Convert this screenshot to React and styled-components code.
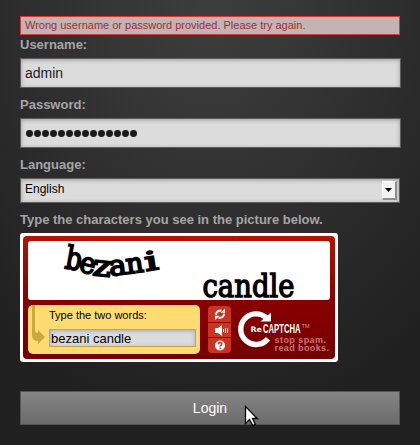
import React from "react";
import styled, { createGlobalStyle } from "styled-components";

const GlobalStyle = createGlobalStyle`
  * { box-sizing: border-box; }
  body { margin: 0; background: #202020; font-family: "Liberation Sans", Arial, sans-serif; }
`;

const Page = styled.main`
  position: relative;
  height: 445px;
  padding: 16px 19px 0 20px;
  overflow: hidden;
  background: radial-gradient(ellipse 330px 430px at 210px 0, #3d3d3d 0%, #363636 30%, #292929 70%, #202020 100%);
`;

const Form = styled.form`
  display: flex;
  flex-direction: column;
`;

const ErrorMessage = styled.div`
  width: 380px;
  height: 19px;
  padding-left: 4px;
  border: 1px solid #d83a3a;
  background: #c5b3b3;
  color: #9a3038;
  font-size: 11px;
  line-height: 17px;
`;

const Label = styled.label`
  height: ${(p) => p.$height}px;
  padding-top: ${(p) => p.$top}px;
  color: #a5a5a5;
  font-size: 13px;
  font-weight: bold;
  line-height: 15px;
`;

const Field = styled.input`
  width: 381px;
  height: 30px;
  padding: 0 4px;
  border: 1px solid #5e5e5e;
  border-radius: 0;
  outline: 0;
  background: #dcdcdc;
  box-shadow: inset 0 1px 4px #999;
  color: #1b1b1b;
  font: 14px "Liberation Sans", Arial, sans-serif;
`;

const Dots = styled.div`
  display: flex;
  align-items: center;
  gap: 1.2px;
  width: 381px;
  height: 30px;
  padding: 1px 5px 0;
  border: 1px solid #5e5e5e;
  background: #dcdcdc;
  box-shadow: inset 0 1px 4px #999;
`;

const Dot = styled.span`
  width: 6.8px;
  height: 6.8px;
  border-radius: 50%;
  background: #1b1b1b;
`;

const Select = styled.div`
  display: flex;
  justify-content: space-between;
  width: 380px;
  height: 25px;
  padding: 2px 2px 2px 4px;
  border: 1px solid #5e5e5e;
  background: #dcdcdc;
  box-shadow: inset 0 1px 4px #999;
  color: #000;
  font-size: 12px;
  line-height: 16px;
`;

const SelectArrow = styled.span`
  display: grid;
  place-items: center;
  width: 15px;
  height: 19px;
  border: 1px solid #fff;
  border-right: 2px solid #8e8e8e;
  border-bottom: 2px solid #8e8e8e;
  background: #f2f2ee;
`;

const Captcha = styled.section`
  width: 318px;
  height: 129px;
  padding: 3px;
  border-radius: 3px;
  background: #fff;
`;

const CaptchaBody = styled.div`
  height: 123px;
  padding: 5px;
  border-radius: 4px;
  background: linear-gradient(#b31500 0%, #a00b00 22%, #880000 55%, #750000 100%);
`;

const Challenge = styled.svg`
  display: block;
  width: 302px;
  height: 59px;
  border-radius: 3px;
  background: #fff;
  font-family: "DejaVu Serif", serif;
  stroke: #000;
`;

const CaptchaRow = styled.div`
  display: flex;
  padding-top: 5px;
`;

const AnswerPanel = styled.div`
  display: flex;
  width: 172px;
  height: 49px;
  border-radius: 5px;
  background: #ffdc73;
`;

const ArrowMark = styled.svg`
  width: 21px;
  height: 49px;
`;

const AnswerBody = styled.div`
  padding-top: 4px;
  font-size: 11px;
  line-height: 13px;
`;

const AnswerInput = styled.input`
  display: block;
  width: 147px;
  height: 18px;
  margin-top: 7px;
  padding: 0 1px;
  border: 1px solid #c6a543;
  border-radius: 0;
  outline: 0;
  background: #dcdcdc;
  box-shadow: inset 0 1px 4px #aaa;
  font: 13px "Liberation Sans", Arial, sans-serif;
`;

const Tools = styled.div`
  display: grid;
  grid-template-rows: 16px 14px 15px;
  gap: 1px;
  width: 23px;
  height: 47px;
  margin: 1px 0 0 8px;
  overflow: hidden;
  border-radius: 4px;
  background: #8d0b04;
`;

const Tool = styled.button`
  display: block;
  width: 23px;
  padding: 0;
  border: 0;
  overflow: hidden;
  background: #cd3322;
  svg { display: block; }
`;

const Logo = styled.svg`
  width: 99px;
  height: 50px;
`;

const Login = styled.button`
  width: 380px;
  height: 34px;
  margin-top: 29px;
  padding: 0;
  border: 1px solid #555;
  background: linear-gradient(#858585, #6b6b6b);
  color: #fff;
  font: 14px "Liberation Sans", Arial, sans-serif;
`;

const Cursor = styled.svg`
  position: absolute;
  left: 244px;
  top: 405px;
  width: 16px;
  height: 23px;
  pointer-events: none;
`;

const warped = [
  ["b", 36, 27, 10, 32, 0.8],
  ["e", 50, 30, 14, 29, 0.92],
  ["z", 64, 34, 6, 29, 1.2],
  ["a", 82, 35, -7, 28, 1.05],
  ["n", 99, 33, -8, 28, 0.98],
  ["i", 118, 30, -9, 26, 1.6],
];

export default function App() {
  return (
    <Page>
      <GlobalStyle />
      <Form onSubmit={(e) => e.preventDefault()}>
        <ErrorMessage>Wrong username or password provided. Please try again.</ErrorMessage>
        <Label $height={23} $top={2}>Username:</Label>
        <Field defaultValue="admin" />
        <Label $height={30} $top={9}>Password:</Label>
        <Dots>{Array.from({ length: 14 }, (_, i) => <Dot key={i} />)}</Dots>
        <Label $height={30} $top={9}>Language:</Label>
        <Select>
          English
          <SelectArrow>
            <svg width="8" height="4"><path d="M0 0h7L3.5 4z" /></svg>
          </SelectArrow>
        </Select>
        <Label $height={30} $top={9}>Type the characters you see in the picture below.</Label>
        <Captcha>
          <CaptchaBody>
            <Challenge viewBox="0 0 302 59">
              {warped.map(([letter, x, y, angle, size, stretch]) => (
                <text key={letter} fontSize={size} strokeWidth="1.8" transform={`translate(${x} ${y}) rotate(${angle}) scale(${stretch} 1)`}>
                  {letter}
                </text>
              ))}
              <text x="174.5" y="55.500" fontSize="32" strokeWidth="1.400" textLength="92" lengthAdjust="spacingAndGlyphs">candle</text>
            </Challenge>
            <CaptchaRow>
              <AnswerPanel>
                <ArrowMark viewBox="0 0 21 49">
                  <path d="M4 0h3v25q0 3 3 3v-3l7 7-7 7v-3q-6 0-6-6z" fill="#cca940" />
                </ArrowMark>
                <AnswerBody>
                  Type the two words:
                  <AnswerInput defaultValue="bezani candle" />
                </AnswerBody>
              </AnswerPanel>
              <Tools>
                <Tool type="button" aria-label="Refresh">
                  <svg width="23" height="16" fill="none" stroke="#fff" strokeWidth="1.800">
                    <path d="M8 9Q8 4.500 13.500 4.500M16 7.500Q16 12 10.500 12" />
                    <path d="M12.500 6.800L17 2.500v4.300zM11.500 9.700L7 14V9.700z" fill="#fff" stroke="none" />
                  </svg>
                </Tool>
                <Tool type="button" aria-label="Audio">
                  <svg width="23" height="15" fill="#fff">
                    <path d="M7 5h3l4-3v11l-4-3H7zM15 6h1v3h-1zM17 5h1v5h-1zM19 5h1v5h-1z" />
                  </svg>
                </Tool>
                <Tool type="button" aria-label="Help">
                  <svg width="23" height="15">
                    <circle cx="12" cy="7.500" r="5" fill="#fff" />
                    <path d="M10.300 6.200q0-1.700 1.800-1.700t1.700 1.500q0 1-1.600 1.800v.8M12.200 9.600v1.400" fill="none" stroke="#cd3322" strokeWidth="1.500" />
                  </svg>
                </Tool>
              </Tools>
              <Logo viewBox="0 0 99 50">
                <path d="M35.500 13A15.300 15.300 0 1 0 37 33.700" fill="none" stroke="#fff" strokeWidth="5.400" />
                <path d="M40 7.500v9H29.500z" fill="#fff" />
                <text x="19.500" y="27" fill="#fff" fontFamily="DejaVu Sans" fontSize="7.500" fontWeight="bold" textLength="11.500" lengthAdjust="spacingAndGlyphs">Re</text>
                <text x="32" y="28.300" fill="#fff" fontFamily="Liberation Sans" fontSize="12.700" fontWeight="bold" textLength="37.500" lengthAdjust="spacingAndGlyphs">CAPTCHA</text>
                <text x="70.500" y="23" fill="#d59b94" fontFamily="Liberation Sans" fontSize="5.500" textLength="8" lengthAdjust="spacingAndGlyphs">TM</text>
                <text x="43.500" y="37.500" fill="#c97872" fontFamily="Liberation Sans" fontSize="9" fontWeight="bold" textLength="51.500" lengthAdjust="spacing">stop spam.</text>
                <text x="43.500" y="45.700" fill="#c97872" fontFamily="Liberation Sans" fontSize="9" fontWeight="bold" textLength="54.500" lengthAdjust="spacing">read books.</text>
              </Logo>
            </CaptchaRow>
          </CaptchaBody>
        </Captcha>
        <Login type="submit">Login</Login>
      </Form>
      <Cursor viewBox="0 0 16 23">
        <path d="M1.500 1.500v17l4-4 3.200 6 2.600-1.300-2.800-5.700h4.800z" fill="#fff" stroke="#000" strokeWidth="1.300" />
      </Cursor>
    </Page>
  );
}
